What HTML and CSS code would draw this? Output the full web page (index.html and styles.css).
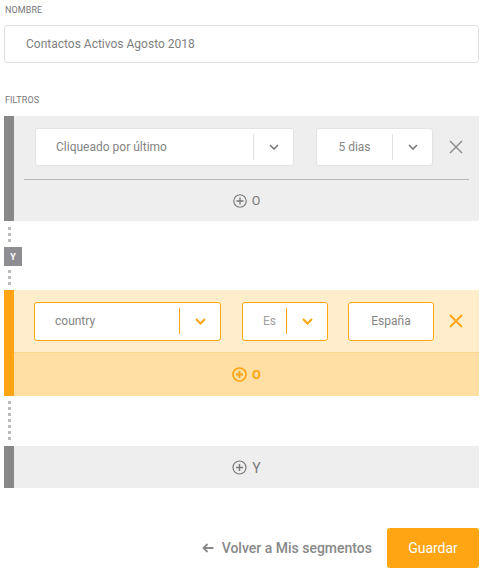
FILE: index.html
```html
<!DOCTYPE html>
<html lang="es">
<head>
<meta charset="utf-8">
<title>Segmento</title>
<link rel="stylesheet" href="styles.css">
</head>
<body>
<div class="page">
  <div class="label label-nombre">NOMBRE</div>
  <div class="name-input">Contactos Activos Agosto 2018</div>

  <div class="label label-filtros">FILTROS</div>

  <div class="group group-gray">
    <div class="group-body">
      <div class="row row-gray">
        <div class="select sel-a">
          <span class="sel-text">Cliqueado por último</span>
          <span class="sel-div"></span>
          <span class="sel-arrow"><svg width="10" height="6" viewBox="0 0 10 6"><path d="M1 1 L5 5 L9 1" fill="none" stroke="#777" stroke-width="1.6"/></svg></span>
        </div>
        <div class="select sel-b">
          <span class="sel-text center">5 dias</span>
          <span class="sel-div"></span>
          <span class="sel-arrow"><svg width="10" height="6" viewBox="0 0 10 6"><path d="M1 1 L5 5 L9 1" fill="none" stroke="#777" stroke-width="1.6"/></svg></span>
        </div>
        <span class="close"><svg width="14" height="14" viewBox="0 0 14 14"><path d="M1 1 L13 13 M13 1 L1 13" stroke="#888" stroke-width="1.4"/></svg></span>
      </div>
      <div class="add add-gray">
        <svg width="14" height="14" viewBox="0 0 14 14"><circle cx="7" cy="7" r="6.2" fill="none" stroke="#777" stroke-width="1.1"/><path d="M7 3.5 V10.5 M3.5 7 H10.5" stroke="#777" stroke-width="1.3"/></svg>
        <span>O</span>
      </div>
    </div>
  </div>

  <div class="dots dots-a"></div>
  <div class="badge">Y</div>
  <div class="dots dots-b"></div>

  <div class="group group-orange">
    <div class="group-body">
      <div class="row row-orange">
        <div class="select o sel-c">
          <span class="sel-text">country</span>
          <span class="sel-div"></span>
          <span class="sel-arrow"><svg width="11" height="7" viewBox="0 0 11 7"><path d="M1 1 L5.5 5.5 L10 1" fill="none" stroke="#ffa514" stroke-width="2"/></svg></span>
        </div>
        <div class="select o sel-d">
          <span class="sel-text clip">Es</span>
          <span class="sel-div"></span>
          <span class="sel-arrow"><svg width="11" height="7" viewBox="0 0 11 7"><path d="M1 1 L5.5 5.5 L10 1" fill="none" stroke="#ffa514" stroke-width="2"/></svg></span>
        </div>
        <div class="select o sel-e">
          <span class="sel-text center">España</span>
        </div>
        <span class="close"><svg width="14" height="14" viewBox="0 0 14 14"><path d="M1 1 L13 13 M13 1 L1 13" stroke="#ffa514" stroke-width="1.8"/></svg></span>
      </div>
      <div class="add add-orange">
        <svg width="15" height="15" viewBox="0 0 15 15"><circle cx="7.5" cy="7.5" r="6.5" fill="none" stroke="#ffa514" stroke-width="1.7"/><path d="M7.5 4 V11 M4 7.5 H11" stroke="#ffa514" stroke-width="1.8"/></svg>
        <span>O</span>
      </div>
    </div>
  </div>

  <div class="dots dots-c"></div>

  <div class="group group-gray">
    <div class="group-body">
      <div class="add add-gray add-y">
        <svg width="15" height="15" viewBox="0 0 15 15"><circle cx="7.5" cy="7.5" r="6.5" fill="none" stroke="#777" stroke-width="1.2"/><path d="M7.5 4 V11 M4 7.5 H11" stroke="#777" stroke-width="1.4"/></svg>
        <span>Y</span>
      </div>
    </div>
  </div>

  <div class="footer">
    <a class="back"><svg class="arrow" width="12" height="10" viewBox="0 0 12 10"><path d="M11.5 5 H2 M5.5 1 L1.5 5 L5.5 9" fill="none" stroke="#888" stroke-width="1.8"/></svg>Volver a Mis segmentos</a>
    <button class="save">Guardar</button>
  </div>
</div>
</body>
</html>
```
FILE: styles.css
```css
* { box-sizing: border-box; }
html, body { margin: 0; padding: 0; background: #fff; }
body { font-family: Roboto, "Liberation Sans", Arial, sans-serif; color: #888; }
.page { padding: 0 6px 0 4px; width: 485px; }

.label { font-size: 9px; color: #777; letter-spacing: 0.1px; line-height: 11px; }
.label-nombre { padding-top: 5px; padding-left: 1px; }
.label-filtros { margin-top: 32px; padding-left: 1px; }

.name-input {
  margin-top: 9px;
  height: 38px;
  border: 1px solid #e0e0e0;
  border-radius: 3px;
  padding-left: 21px;
  font-size: 12px;
  line-height: 36px;
  color: #808080;
}

.group { display: flex; }
.group::before { content: ""; width: 10px; flex: none; }
.group-gray { background: #eeeeee; }
.group-gray::before { background: #888; }
.group-orange::before { background: #ffa514; }
.group-body { flex: 1; }
.label-filtros + .group { margin-top: 10px; }

.row { display: flex; align-items: center; }
.row-gray { padding: 12px 0 13px 11px; margin: 0 10px; border-bottom: 1px solid #b5b5b5; }
.row-orange { background: #ffedcc; padding: 12px 0 12px 20px; height: 63px; border-bottom: 1px solid #fbd48d; }

.select {
  display: flex; align-items: center;
  height: 38px;
  background: #fff;
  border: 1px solid #e3e3e3;
  border-radius: 3px;
  font-size: 12px;
  color: #848484;
}
.select.o { border-color: #ffa514; height: 39px; }
.sel-text { flex: 1; padding-left: 20px; white-space: nowrap; overflow: hidden; }
.sel-text.center { padding-left: 0; text-align: center; }
.sel-div { width: 1px; height: 26px; background: #e0e0e0; flex: none; }
.select.o .sel-div { background: #ffa514; }
.sel-arrow { width: 39px; display: flex; justify-content: center; align-items: center; flex: none; }
.sel-a { width: 259px; }
.sel-b { width: 117px; margin-left: 22px; }
.sel-c { width: 187px; }
.sel-c .sel-arrow { width: 40px; }
.sel-d { width: 86px; margin-left: 21px; }
.sel-d .sel-text { padding-left: 20px; color: #a0a0a0; }
.sel-d .sel-arrow { width: 40px; }
.sel-e { width: 86px; margin-left: 20px; }

.close { display: flex; margin-left: 16px; }
.row-orange .close { margin-left: 15px; }

.add { display: flex; justify-content: center; align-items: center; gap: 5px; font-size: 12.5px; }
.add span { line-height: 14px; }
.add-gray { height: 41px; color: #777; }
.add-orange { height: 43px; background: #ffdfa3; color: #ffa514; font-weight: 700; font-size: 13px; }
.add-y { height: 42px; font-size: 14px; }
.add-y span { margin-top: 1px; }

.dots {
  width: 3px; margin-left: 4px;
  background: repeating-linear-gradient(to bottom, #bbb 0 3px, transparent 3px 6px);
}
.dots-a { margin-top: 6px; height: 15px; margin-bottom: 5px; }
.dots-b { margin-top: 4px; height: 15px; margin-bottom: 5px; }
.dots-c { margin-top: 5px; height: 39px; margin-bottom: 6px; }

.badge {
  width: 18px; height: 19px;
  background: #8e8e92; color: #fff;
  font-size: 9px; font-weight: 700;
  display: flex; align-items: center; justify-content: center;
}

.footer { display: flex; justify-content: flex-end; align-items: center; margin-top: 40px; }
.back { font-size: 14px; font-weight: 500; color: #888; display: flex; align-items: center; gap: 8px; }
.save {
  margin-left: 15px;
  width: 92px; height: 40px;
  background: #ffa514; color: #fff;
  border: none; border-radius: 3px;
  font-family: Roboto, "Liberation Sans", Arial, sans-serif;
  font-size: 14px;
}
```
